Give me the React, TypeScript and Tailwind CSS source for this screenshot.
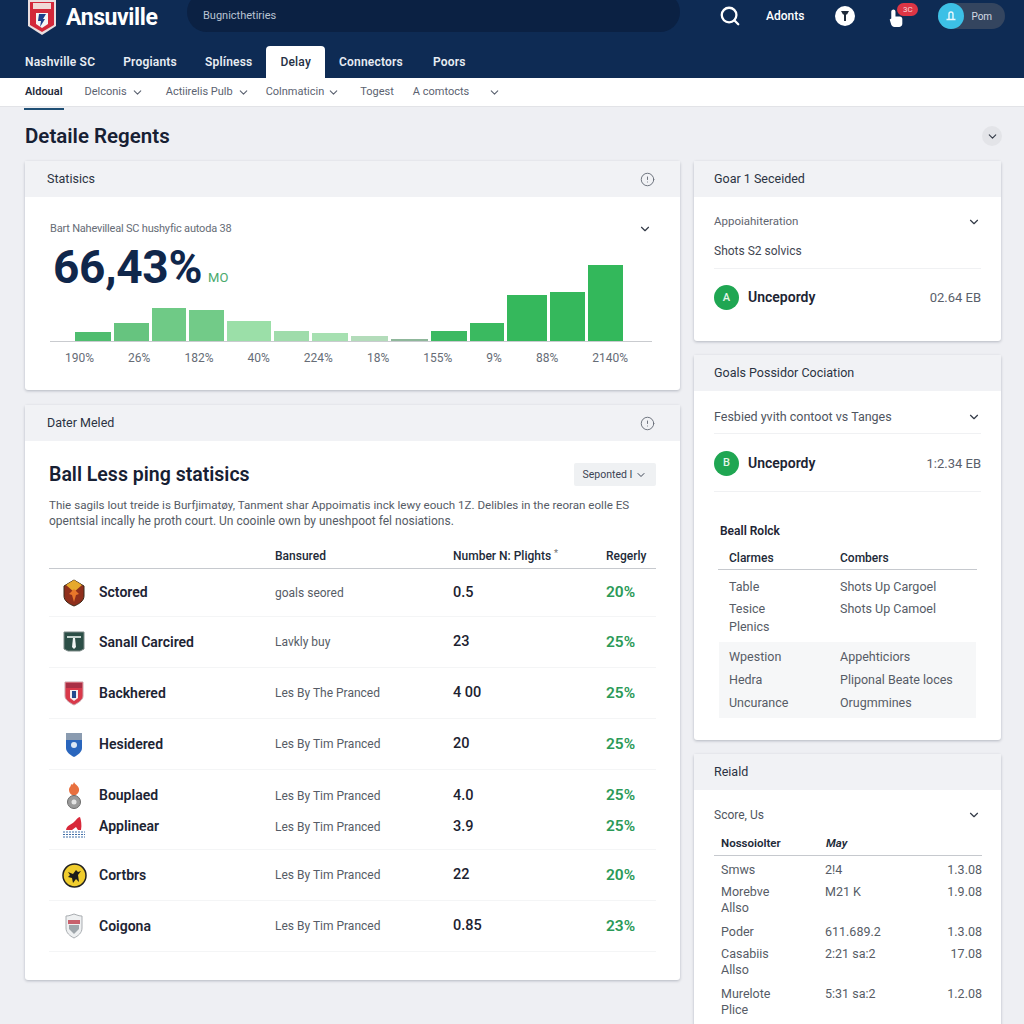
import { ChevronDown, CircleAlert, Search } from "lucide-react";
import type { ReactNode } from "react";

const bars = [
  { w: "w-[36px]", h: "h-[9px]", c: "bg-[#4fbd6f]" },
  { w: "w-[35px]", h: "h-[18px]", c: "bg-[#66c47f]" },
  { w: "w-[34px]", h: "h-[33px]", c: "bg-[#6fca86]" },
  { w: "w-[35px]", h: "h-[31px]", c: "bg-[#72cb88]" },
  { w: "w-[44px]", h: "h-[20px]", c: "bg-[#9bdfa8]" },
  { w: "w-[35px]", h: "h-[10px]", c: "bg-[#9fdcab]" },
  { w: "w-[36px]", h: "h-[8px]", c: "bg-[#a6e0b1]" },
  { w: "w-[37px]", h: "h-[5px]", c: "bg-[#b3dcba]" },
  { w: "w-[37px]", h: "h-[2px]", c: "bg-[#8fb79b]" },
  { w: "w-[36px]", h: "h-[10px]", c: "bg-[#3cb962]" },
  { w: "w-[34px]", h: "h-[18px]", c: "bg-[#3aba60]" },
  { w: "w-[40px]", h: "h-[46px]", c: "bg-[#35b85c]" },
  { w: "w-[35px]", h: "h-[49px]", c: "bg-[#35b85c]" },
  { w: "w-[35px]", h: "h-[76px]", c: "bg-[#33b85b]" },
];

const chartLabels = ["190%", "26%", "182%", "40%", "224%", "18%", "155%", "9%", "88%", "2140%"];

function Crest({ kind }: { kind: number }) {
  if (kind === 0)
    return (
      <svg width="24" height="28" viewBox="0 0 24 28">
        <path d="M12 1 22 7v10c0 5-5 8-10 10C7 25 2 22 2 17V7z" fill="#8f2f1c" stroke="#3a2a1a" />
        <path d="M12 1 20 6l-8 7-8-7z" fill="#e6a92c" />
        <path d="M12 10l5 5-3 1-2 7-2-7-3-1z" fill="#e8762a" />
      </svg>
    );
  if (kind === 1)
    return (
      <svg width="24" height="24" viewBox="0 0 24 24">
        <path d="M2 2h20v17l-4 2H6l-4-2z" fill="#2c4f47" stroke="#7d8a87" />
        <path d="M5 6h14v2H5z" fill="#c5d4cf" />
        <path d="M11 8h2l1 9-2 2-2-2z" fill="#f1f5f4" />
      </svg>
    );
  if (kind === 2)
    return (
      <svg width="22" height="26" viewBox="0 0 22 26">
        <path d="M2 2h18v14c0 4-5 7-9 9-4-2-9-5-9-9z" fill="#d9394a" stroke="#c9a3aa" />
        <path d="M3 3h16v5H3z" fill="#a82f45" />
        <path d="M7 10h8v8l-4 3-4-3z" fill="#f3eef0" />
        <path d="M9 11h4v7H9z" fill="#234a8f" />
      </svg>
    );
  if (kind === 3)
    return (
      <svg width="20" height="27" viewBox="0 0 20 27">
        <path d="M2 2h16v15c0 4-4 7-8 9-4-2-8-5-8-9z" fill="#2a66bd" />
        <path d="M2 2h16v7H2z" fill="#8a9bb0" />
        <circle cx="10" cy="14" r="3" fill="#dbe7f5" />
      </svg>
    );
  if (kind === 4)
    return (
      <svg width="16" height="28" viewBox="0 0 16 28">
        <path d="M8 0c1 3 6 4 5 9-1 3-3 4-5 5-3-1-5-3-5-6 0-3 2-3 2-6 1 1 2 1 3-2z" fill="#e8703f" />
        <circle cx="8" cy="20" r="6.5" fill="#9b9b9b" stroke="#6b6b6b" />
        <circle cx="8" cy="20" r="2.5" fill="#e4e4e4" />
      </svg>
    );
  if (kind === 5)
    return (
      <svg width="24" height="22" viewBox="0 0 24 22">
        <path d="M4 14c1-5 5-5 8-8 2-2 4-5 6-5 1 3 2 8 1 13h-3l-2-3-4 3z" fill="#d8283a" />
        <path d="M1 16h22M1 18.500h22M1 21h22" stroke="#3f6ea8" strokeDasharray="2 1" />
      </svg>
    );
  if (kind === 6)
    return (
      <svg width="25" height="25" viewBox="0 0 25 25">
        <circle cx="12.500" cy="12.500" r="11.500" fill="#f0cd2e" stroke="#222" strokeWidth="1.500" />
        <path d="M6 9l5 2 3-4 2 2 3-1-3 4 1 7-3-3-3 4-1-5-4-1 2-2z" fill="#1b1b1b" />
      </svg>
    );
  return (
    <svg width="20" height="26" viewBox="0 0 20 26">
      <path d="M2 3c3 0 5-1 8-2 3 1 5 2 8 2v12c0 5-4 8-8 10-4-2-8-5-8-10z" fill="#eef0f1" stroke="#a9adb1" />
      <path d="M4 7h12v4H4z" fill="#c8606c" />
      <path d="M5 12h10v4l-5 5-5-5z" fill="#9fa6ab" />
    </svg>
  );
}

function Shield() {
  return (
    <svg width="30" height="36" viewBox="0 0 30 36">
      <path d="M1 0h28v26L15 35 1 26z" fill="#e9dfe0" />
      <path d="M3 2h24v23L15 32 3 25z" fill="#d3283a" />
      <path d="M6 3h18v6H6z" fill="#f0d9d6" />
      <path d="M9 13h12v11l-6 4-6-4z" fill="#f5f5f5" />
      <path d="M12 14h7l-3 5h2l-5 8 1-6h-3z" fill="#1d3f8c" />
    </svg>
  );
}

function Card({ title, action, wide, children, className }: { title: string; action?: boolean; wide?: boolean; children: ReactNode; className?: string }) {
  return (
    <section className={`rounded-[3px] bg-white shadow-[0_1px_3px_rgba(30,40,60,0.28)] ${className ?? ""}`}>
      <div className={`flex h-9 items-center justify-between bg-[#f1f2f5] pr-[25px] text-[12.500px] text-[#2b3342] ${wide ? "pl-[22px]" : "pl-[20px]"}`}>
        <span>{title}</span>
        {action && <CircleAlert size={15} strokeWidth={1.500} className="text-[#666d78]" />}
      </div>
      {children}
    </section>
  );
}

const rows = [
  { name: "Sctored", desc: "goals seored", num: "0.5", pct: "20%", h: "h-[48px]" },
  { name: "Sanall Carcired", desc: "Lavkly buy", num: "23", pct: "25%", h: "h-[51px]" },
  { name: "Backhered", desc: "Les By The Pranced", num: "4 00", pct: "25%", h: "h-[51px]" },
  { name: "Hesidered", desc: "Les By Tim Pranced", num: "20", pct: "25%", h: "h-[51px]" },
];

const lastRows = [
  { name: "Cortbrs", desc: "Les By Tim Pranced", num: "22", pct: "20%", kind: 6 },
  { name: "Coigona", desc: "Les By Tim Pranced", num: "0.85", pct: "23%", kind: 7 },
];

function Row({ kind, name, desc, num, pct, className }: { kind: number; name: string; desc: string; num: string; pct: string; className: string }) {
  return (
    <div className={`grid grid-cols-[50px_176px_178px_153px_51px] items-center ${className}`}>
      <div className="flex justify-center">
        <Crest kind={kind} />
      </div>
      <div className="text-[14px] font-semibold text-[#1d2433]">{name}</div>
      <div className="text-[12px] text-[#565c66]">{desc}</div>
      <div className="text-[14.500px] font-medium text-[#1c2230]">{num}</div>
      <div className="text-[15.500px] font-semibold text-[#2b9a58]">{pct}</div>
    </div>
  );
}

const reiald = [
  { a: ["Smws"], b: "2!4", c: "1.3.08", h: "h-[22px]" },
  { a: ["Morebve", "Allso"], b: "M21 K", c: "1.9.08", h: "h-[40px]" },
  { a: ["Poder"], b: "611.689.2", c: "1.3.08", h: "h-[22px]" },
  { a: ["Casabiis", "Allso"], b: "2:21 sa:2", c: "17.08", h: "h-[40px]" },
  { a: ["Murelote", "Plice"], b: "5:31 sa:2", c: "1.2.08", h: "h-[40px]" },
];

function Person({ letter, value }: { letter: string; value: string }) {
  return (
    <div className="flex items-center">
      <div className="flex h-[25px] w-[25px] items-center justify-center rounded-full bg-[#1fa652] text-[11px] font-medium text-[#e4f5ea]">
        {letter}
      </div>
      <div className="ml-[9px] flex-1 text-[14px] font-semibold text-[#1d2433]">Uncepordy</div>
      <div className="text-[13px] text-[#5a606b]">{value}</div>
    </div>
  );
}

export default function App() {
  return (
    <div className="h-screen overflow-hidden bg-[#eeeff3] font-[Roboto,sans-serif]">
      <header className="h-[78px] bg-[#0e2b54]">
        <div className="flex h-[46px] overflow-hidden">
          <div className="ml-[27px] shrink-0">
            <Shield />
          </div>
          <div className="ml-[9px] w-[121px] shrink-0 pt-[1px] text-[23px] font-bold tracking-[-0.4px] text-white">Ansuville</div>
          <div className="-mt-2 flex h-[40px] w-[493px] shrink-0 items-center rounded-full bg-[#0b2143] pl-[16px] pt-2 text-[11px] text-[#b9c3d2]">
            Bugnicthetiries
          </div>
          <div className="ml-[39px] flex h-[32px] items-center text-white">
            <Search size={22} strokeWidth={2.500} />
            <span className="ml-[25px] text-[12px] font-medium">Adonts</span>
            <span className="ml-[31px] flex h-5 w-5 items-center justify-center rounded-full bg-white">
              <svg width="10" height="12" viewBox="0 0 10 12">
                <path d="M1 1h8L7 4.500H6V11H4V4.500H3z" fill="#1f2a3a" />
              </svg>
            </span>
            <span className="relative ml-[32px]">
              <svg width="18" height="20" viewBox="0 0 15 19" className="mt-[4px]">
                <path
                  d="M5 1.500c1 0 2 .7 2 2V8h4c1.500 0 2.500 1 2.500 2.500V15c0 2-1.500 3-3 3H6c-1.500 0-2.500-1-3-2L1.500 11 3 10V3.500c0-1 1-2 2-2z"
                  fill="#ffffff"
                />
              </svg>
              <span className="absolute -right-[13px] -top-[1px] flex h-[13px] w-[21px] items-center justify-center rounded-full bg-[#dc3545] text-[8px] text-[#f6d5d8]">
                3C
              </span>
            </span>
            <span className="ml-[33px] flex h-[26px] w-[67px] items-center rounded-full bg-[#34455f]">
              <span className="flex h-[26px] w-[26px] items-center justify-center rounded-full bg-[#3cc0e6]">
                <svg width="12" height="12" viewBox="0 0 12 12">
                  <path d="M4 9V4a2 2 0 0 1 4 0v5M1.500 9.500h9" stroke="#eaf8fc" strokeWidth="1.400" fill="none" />
                </svg>
              </span>
              <span className="ml-[7px] text-[10px] text-[#d5dbe4]">Pom</span>
            </span>
          </div>
        </div>
        <nav className="flex h-[32px] pl-[11px] text-[12px] font-semibold tracking-[0.2px] text-[#e8edf3]">
          <span className="flex items-center px-[14px]">Nashville SC</span>
          <span className="flex items-center px-[14px]">Progiants</span>
          <span className="flex items-center px-[14px]">Splíness</span>
          <span className="flex items-center rounded-t-[4px] bg-white px-[14px] font-medium text-[#253044]">Delay</span>
          <span className="flex items-center px-[14px]">Connectors</span>
          <span className="flex items-center pl-[16px]">Poors</span>
        </nav>
      </header>

      <div className="flex h-[29px] items-center border-b border-[#e2e3e7] bg-white pl-[25px] pt-[1px] text-[11px] text-[#5b6270]">
        <span className="relative font-semibold text-[#1f2a3a]">
          Aldoual
          <span className="absolute -bottom-[9px] -left-px -right-px h-[2px] bg-[#1f4e74]" />
        </span>
        <span className="ml-[22px]">Delconis</span>
        <ChevronDown size={13} className="ml-[4px]" />
        <span className="ml-[22px]">Actiirelis Pulb</span>
        <ChevronDown size={13} className="ml-[4px]" />
        <span className="ml-[16px]">Colnmaticin</span>
        <ChevronDown size={13} className="ml-[3px]" />
        <span className="ml-[20px]">Togest</span>
        <span className="ml-[19px]">A comtocts</span>
        <ChevronDown size={13} className="ml-[19px]" />
      </div>

      <div className="flex h-[54px] items-center justify-between pl-[25px] pr-[22px] pt-[4px]">
        <h1 className="text-[20.500px] font-semibold text-[#172033]">Detaile Regents</h1>
        <span className="flex h-5 w-5 items-center justify-center rounded-full bg-[#e3e4e8]">
          <ChevronDown size={13} className="text-[#333a47]" />
        </span>
      </div>

      <main className="flex gap-[14px] pl-[25px]">
        <div className="flex w-[655px] shrink-0 flex-col gap-[15px]">
          <Card title="Statisics" action wide className="h-[229px]">
            <div className="px-[25px] pt-[24px]">
              <div className="flex items-center justify-between pr-[3px] text-[11px] tracking-[-0.2px] text-[#666c76]">
                <span>Bart Nahevilleal SC hushyfic autoda 38</span>
                <ChevronDown size={14} className="text-[#333a47]" />
              </div>
              <div className="mt-[6px] flex h-[47px] items-end pl-[3px]">
                <span className="text-[46px] font-bold leading-[47px] tracking-[-0.3px] text-[#10274b]">66,43%</span>
                <span className="mb-[3px] ml-[6px] text-[13px] text-[#4aa96c]">MO</span>
              </div>
              <div className="mr-[3px] mt-[-26px] flex h-[77px] items-end gap-[3px] border-b border-[#c9cbcf] pl-[25px] pr-[25px]">
                {bars.map((b, i) => (
                  <div key={i} className={`${b.w} ${b.h} ${b.c}`} />
                ))}
              </div>
              <div className="mt-[7px] flex justify-between pl-[15px] pr-[27px] text-[12px] text-[#666c76]">
                {chartLabels.map((l) => (
                  <span key={l}>{l}</span>
                ))}
              </div>
            </div>
          </Card>

          <Card title="Dater Meled" action wide className="h-[575px]">
            <div className="pl-[24px] pr-[24px] pt-[19px]">
              <div className="flex items-center justify-between">
                <h2 className="text-[19.500px] font-semibold text-[#172033]">Ball Less ping statisics</h2>
                <span className="flex h-[23px] w-[82px] items-center justify-center gap-[3px] rounded-[2px] bg-[#eff1f3] text-[10.500px] text-[#3c4454]">
                  Seponted I
                  <ChevronDown size={12} />
                </span>
              </div>
              <p className="mt-[8px] text-[12px] leading-[16px] text-[#555b65]">
                <span className="text-[11.600px]">
                  Thie sagils lout treide is Burfjimatøy, Tanment shar Appoimatis inck lewy eouch 1Z. Delibles in the reoran eolle ES
                </span>
                <br />
                opentsial incally he proth court. Un cooinle own by uneshpoot fel nosiations.
              </p>
              <div className="mt-[18px] grid h-[22px] grid-cols-[226px_178px_153px_51px] items-start border-b border-[#c6c9ce] text-[12px] font-medium text-[#222a38]">
                <span className="col-start-2">Bansured</span>
                <span>
                  Number N: Plights <sup className="text-[#777]">*</sup>
                </span>
                <span>Regerly</span>
              </div>
              {rows.map((r, i) => (
                <Row key={r.name} kind={i} name={r.name} desc={r.desc} num={r.num} pct={r.pct} className={`${r.h} border-b border-[#f4f5f6]`} />
              ))}
              <div className="h-[80px] border-b border-[#f4f5f6] pt-[10px]">
                <Row kind={4} name="Bouplaed" desc="Les By Tim Pranced" num="4.0" pct="25%" className="h-[31px]" />
                <Row kind={5} name="Applinear" desc="Les By Tim Pranced" num="3.9" pct="25%" className="h-[31px]" />
              </div>
              {lastRows.map((r) => (
                <Row key={r.name} kind={r.kind} name={r.name} desc={r.desc} num={r.num} pct={r.pct} className="h-[51px] border-b border-[#f4f5f6]" />
              ))}
            </div>
          </Card>
        </div>

        <div className="flex w-[307px] shrink-0 flex-col gap-[14px]">
          <Card title="Goar 1 Seceided" className="h-[180px]">
            <div className="px-[20px] pt-[16px]">
              <div className="flex items-center justify-between text-[11.500px] text-[#5f6570]">
                <span>Appoiahiteration</span>
                <ChevronDown size={14} className="text-[#333a47]" />
              </div>
              <div className="mt-[12px] border-b border-[#f0f1f3] pb-[8px] text-[12px] text-[#3f4652]">Shots S2 solvics</div>
              <div className="mt-[16px]">
                <Person letter="A" value="02.64 EB" />
              </div>
            </div>
          </Card>

          <Card title="Goals Possidor Cociation" className="h-[385px]">
            <div className="px-[20px] pt-[17px]">
              <div className="flex items-center justify-between border-b border-[#f0f1f3] pb-[6px] text-[12.500px] text-[#4f5560]">
                <span>Fesbied yvith contoot vs Tanges</span>
                <ChevronDown size={14} className="text-[#333a47]" />
              </div>
              <div className="border-b border-[#f0f1f3] pb-[15px] pt-[17px]">
                <Person letter="B" value="1:2.34 EB" />
              </div>
              <div className="mt-[30px] pl-[6px] text-[12px] font-semibold text-[#1d2433]">Beall Rolck</div>
              <div className="ml-[4px] mr-[4px] mt-[9px] grid grid-cols-[111px_1fr] border-b border-[#c6c9ce] pb-[2px] pl-[11px] text-[12px] font-medium text-[#222a38]">
                <span>Clarmes</span>
                <span>Combers</span>
              </div>
              <div className="ml-[15px] mt-[8px] grid grid-cols-[111px_1fr] text-[12.500px] leading-[18px] text-[#565c66]">
                <span>Table</span>
                <span>Shots Up Cargoel</span>
                <span className="mt-[4px]">Tesice</span>
                <span className="mt-[4px]">Shots Up Camoel</span>
                <span>Plenics</span>
              </div>
              <div className="ml-[5px] mr-[5px] mt-[6px] grid h-[76px] grid-cols-[111px_1fr] content-center gap-y-[5px] bg-[#f6f7f8] pl-[10px] text-[12.500px] leading-[18px] text-[#565c66]">
                <span>Wpestion</span>
                <span>Appehticiors</span>
                <span>Hedra</span>
                <span>Pliponal Beate loces</span>
                <span>Uncurance</span>
                <span>Orugmmines</span>
              </div>
            </div>
          </Card>

          <Card title="Reiald" className="h-[400px]">
            <div className="pl-[20px] pr-[19px] pt-[16px]">
              <div className="flex items-center justify-between text-[12px] text-[#4f5560]">
                <span>Score, Us</span>
                <ChevronDown size={14} className="mr-[1px] text-[#333a47]" />
              </div>
              <div className="mt-[11px] grid grid-cols-[105px_1fr] border-b border-[#c6c9ce] pb-[3px] pl-[7px] text-[11.500px] font-semibold text-[#222a38]">
                <span>Nossoiolter</span>
                <span className="italic">May</span>
              </div>
              <div className="pt-[4px] text-[12.500px] leading-[16px] text-[#565c66]">
                {reiald.map((r) => (
                  <div key={r.c + r.b} className={`grid grid-cols-[104px_1fr_auto] pl-[7px] pt-[2px] ${r.h}`}>
                    <span>
                      {r.a.map((line) => (
                        <span key={line} className="block">
                          {line}
                        </span>
                      ))}
                    </span>
                    <span>{r.b}</span>
                    <span>{r.c}</span>
                  </div>
                ))}
              </div>
            </div>
          </Card>
        </div>
      </main>
    </div>
  );
}
